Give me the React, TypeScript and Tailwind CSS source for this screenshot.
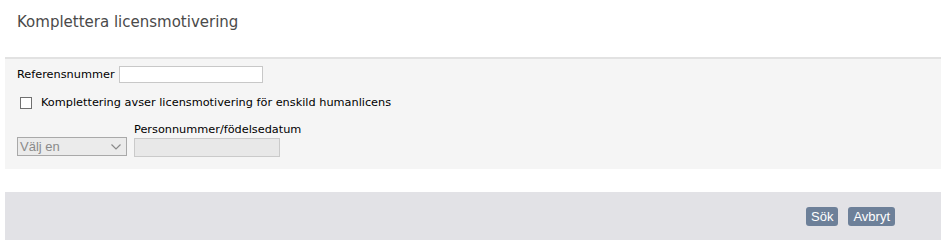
import React from 'react'

const verdana = "font-['Verdana','DejaVu_Sans',sans-serif]"
const arial = "font-['Liberation_Sans',Arial,sans-serif]"

export default function App() {
  return (
    <div className="h-[245px] w-[944px] bg-white">
      {/* Header */}
      <div className="flex h-[57px] items-start px-[17px] pt-[11px]">
        <h1 className={`${verdana} text-[15px] text-[#4a4a4a]`}>Komplettera licensmotivering</h1>
      </div>

      {/* Search form */}
      <div className={`${verdana} ml-[5px] h-[112px] w-[936px] border-t-2 border-[#e2e2e2] bg-[#f5f5f5] text-[11.3px] text-black`}>
        <div className="mt-[7px] flex h-[17px] items-center pl-[12px]">
          <label className="mr-[4px] pt-[2px]">Referensnummer</label>
          <input type="text" className="h-[17px] w-[144px] border border-[#c8c8c8] bg-white outline-none" />
        </div>

        <div className="mt-[13px] flex h-[14px] items-center pl-[15px]">
          <span className="h-[12px] w-[12px] border border-[#707070] bg-white" />
          <span className="ml-[9px] pt-[1px]">Komplettering avser licensmotivering för enskild humanlicens</span>
        </div>

        <div className="mt-[13px] flex items-end pl-[12px]">
          <div className={`${arial} mb-[1px] flex h-[19px] w-[110px] items-center justify-between border border-[#a9a9a9] bg-[#ebebeb] pl-[2px] pr-[5px] text-[13px] text-[#8a8a8a]`}>
            <span>Välj en</span>
            <svg width="10" height="6" viewBox="0 0 10 6" fill="none" stroke="#8a8a8a" strokeWidth="1.2">
              <path d="M0.5 0.5 L5 5 L9.5 0.5" />
            </svg>
          </div>
          <div className="ml-[7px] flex flex-col">
            <label className="mb-[1px] leading-[14px]">Personnummer/födelsedatum</label>
            <div className="h-[19px] w-[146px] border border-[#cacaca] bg-[#e8e8e8]" />
          </div>
        </div>
      </div>

      {/* Footer */}
      <div className="ml-[5px] mt-[23px] flex h-[48px] w-[936px] items-center justify-end gap-[10px] bg-[#e2e2e6] pr-[46px]">
        <button className={`${arial} h-[19px] rounded-[3px] bg-[#6d8099] px-[5px] text-[13px] leading-[19px] text-white`}>Sök</button>
        <button className={`${arial} h-[19px] rounded-[3px] bg-[#6d8099] px-[5px] text-[13px] leading-[19px] text-white`}>Avbryt</button>
      </div>
    </div>
  )
}
